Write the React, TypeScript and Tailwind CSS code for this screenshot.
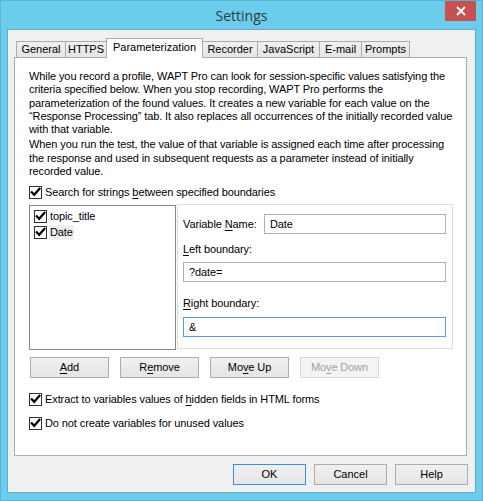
import React from "react";

function Check() {
  return (
    <span className="w-[13px] h-[13px] border border-[#333333] bg-white flex items-center justify-center shrink-0">
      <svg width="11" height="11" viewBox="0 0 11 11">
        <path d="M1.8 5.2 L4.2 7.8 L9.4 1.8" stroke="#000" strokeWidth="2.2" fill="none" strokeLinecap="square" />
      </svg>
    </span>
  );
}

function U({ children }: { children: React.ReactNode }) {
  return <span className="underline underline-offset-[2px]">{children}</span>;
}

function Btn({ children, w, disabled, def }: { children: React.ReactNode; w: string; disabled?: boolean; def?: boolean }) {
  const base = "h-[21px] flex items-center justify-center border leading-[13px] ";
  if (disabled)
    return <div className={base + w + " border-[#D9D9D9] bg-[#F4F4F4] text-[#A0A0A0]"}>{children}</div>;
  if (def)
    return <div className={base + w + " border-[#3C8FDD] bg-gradient-to-b from-[#F0F0F0] to-[#E5E5E5] text-black"}>{children}</div>;
  return <div className={base + w + " border-[#ACACAC] bg-gradient-to-b from-[#F0F0F0] to-[#E5E5E5] text-black"}>{children}</div>;
}

export default function App() {
  const tabs: { name: string; w: string }[] = [
    { name: "General", w: "w-[50px]" },
    { name: "HTTPS", w: "w-[42px]" },
    { name: "Parameterization", w: "w-[97px]" },
    { name: "Recorder", w: "w-[56px]" },
    { name: "JavaScript", w: "w-[63px]" },
    { name: "E-mail", w: "w-[43px]" },
    { name: "Prompts", w: "w-[49px]" },
  ];
  return (
    <div className="w-[483px] h-[501px] bg-[#6BCDEB] border border-[#56B4D6] flex flex-col font-['Liberation_Sans',Arial,sans-serif] text-[11px] text-black leading-[13px] overflow-hidden">
      {/* Title bar */}
      <div className="relative h-[28px] shrink-0 flex items-center justify-center">
        <span className="font-['Open_Sans',sans-serif] text-[14px] leading-[20px] text-[#2E3B42] pt-[1px]">Settings</span>
        <div className="absolute top-[-1px] right-[6px] w-[31px] h-[21px] bg-[#C75050] flex items-center justify-center">
          <svg width="10" height="10" viewBox="0 0 10 10">
            <path d="M1 1 L9 9 M9 1 L1 9" stroke="#fff" strokeWidth="1.8" />
          </svg>
        </div>
      </div>
      {/* Client */}
      <div className="mx-[6px] h-[464px] border border-[#62A9C5] bg-[#F0F0F0] flex flex-col">
        <div className="pt-[8px] pl-[6px] pr-[8px] flex flex-col">
          {/* Tab strip */}
          <div className="h-[19px] flex items-end pl-[2px] relative z-10">
            {tabs.map((t, i) =>
              t.name === "Parameterization" ? (
                <div
                  key={t.name}
                  className={"relative z-10 -mb-px h-[20px] bg-white border border-b-0 border-[#ACACAC] flex justify-center pt-[2px] whitespace-nowrap " + t.w + (i > 0 ? " -ml-px" : "")}
                >
                  {t.name}
                </div>
              ) : (
                <div
                  key={t.name}
                  className={"h-[16px] bg-gradient-to-b from-[#F0F0F0] to-[#E5E5E5] border border-b-0 border-[#ACACAC] flex items-center justify-center whitespace-nowrap " + t.w + (i > 0 ? " -ml-px" : "")}
                >
                  {t.name}
                </div>
              )
            )}
          </div>
          {/* Panel */}
          <div className="h-[399px] bg-white border border-[#ACACAC] pl-[14px] pt-[12px] pr-[13px] flex flex-col tracking-[-0.1px]">
            <div className="leading-[13.33px] whitespace-nowrap">
              <div>While you record a profile, WAPT Pro can look for session-specific values satisfying the</div>
              <div>criteria specified below. When you stop recording, WAPT Pro performs the</div>
              <div>parameterization of the found values. It creates a new variable for each value on the</div>
              <div>“Response Processing” tab. It also replaces all occurrences of the initially recorded value</div>
              <div>with that variable.</div>
            </div>
            <div className="leading-[13.33px] whitespace-nowrap mt-[1.7px]">
              <div>When you run the test, the value of that variable is assigned each time after processing</div>
              <div>the response and used in subsequent requests as a parameter instead of initially</div>
              <div>recorded value.</div>
            </div>
            <div className="mt-[8px] h-[13px] flex items-center gap-[3px]">
              <Check />
              <span>
                Search for strings <U>b</U>etween specified boundaries
              </span>
            </div>
            <div className="mt-[5px] flex items-start">
              <div className="mt-[1px] w-[147px] h-[145px] border border-[#828790] bg-white pt-[2px] pl-[4px] flex flex-col">
                <div className="h-[16px] flex items-center gap-[2px]">
                  <Check />
                  <span className="px-[1px]">topic_title</span>
                </div>
                <div className="h-[16px] flex items-center gap-[2px]">
                  <Check />
                  <span className="px-[1px] bg-[#EFEFEF] leading-[15px]">Date</span>
                </div>
              </div>
              <div className="ml-[1px] w-[276px] h-[145px] border border-[#DCDCDC] bg-white pt-[9px] pl-[5px] pr-[6px] flex flex-col">
                <div className="flex items-center">
                  <span className="w-[81px]">
                    Variable <U>N</U>ame:
                  </span>
                  <div className="w-[182px] h-[20px] border border-[#ABADB3] bg-white pl-[5px] flex items-center">Date</div>
                </div>
                <div className="mt-[9px] h-[13px]">
                  <U>L</U>eft boundary:
                </div>
                <div className="mt-[6px] h-[20px] border border-[#ABADB3] bg-white pl-[5px] flex items-center">?date=</div>
                <div className="mt-[15px] h-[13px]">
                  <U>R</U>ight boundary:
                </div>
                <div className="mt-[7px] h-[20px] border border-[#569DE5] bg-white pl-[5px] flex items-center">&amp;</div>
              </div>
            </div>
            <div className="mt-[7px] ml-[1px] flex gap-[11px]">
              <Btn w="w-[79px]">
                <U>A</U>dd
              </Btn>
              <Btn w="w-[79px]">
                R<U>e</U>move
              </Btn>
              <Btn w="w-[79px]">
                Mo<U>v</U>e Up
              </Btn>
              <Btn w="w-[79px]" disabled>
                Mo<U>v</U>e Down
              </Btn>
            </div>
            <div className="mt-[15px] h-[13px] flex items-center gap-[3px]">
              <Check />
              <span>
                Extract to variables values of <U>h</U>idden fields in HTML forms
              </span>
            </div>
            <div className="mt-[11px] h-[13px] flex items-center gap-[3px]">
              <Check />
              <span>Do not create variables for unused values</span>
            </div>
          </div>
        </div>
        <div className="mt-[8px] pr-[7px] flex justify-end gap-[8px]">
          <Btn w="w-[73px]" def>
            OK
          </Btn>
          <Btn w="w-[73px]">Cancel</Btn>
          <Btn w="w-[73px]">Help</Btn>
        </div>
      </div>
    </div>
  );
}
